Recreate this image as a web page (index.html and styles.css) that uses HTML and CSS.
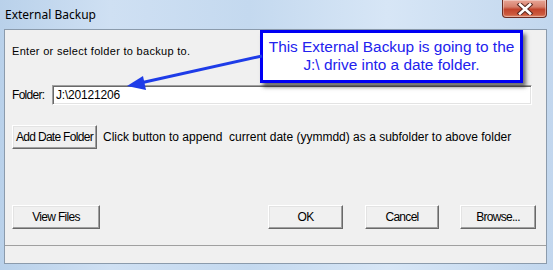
FILE: index.html
```html
<!DOCTYPE html>
<html>
<head>
<meta charset="utf-8">
<link rel="stylesheet" href="styles.css">
</head>
<body>
<div class="window">
  <div class="titlebar">
    <span class="title">External Backup</span>
    <div class="close">
      <svg width="20" height="12" viewBox="0 0 20 12">
        <path d="M5 1.5 L15 10.5 M15 1.5 L5 10.5" stroke="#5a2a22" stroke-width="4.6" stroke-linecap="square"/>
        <path d="M5 1.5 L15 10.5 M15 1.5 L5 10.5" stroke="#ffffff" stroke-width="2.6" stroke-linecap="square"/>
      </svg>
    </div>
  </div>
  <div class="client">
    <div class="content">
      <p class="prompt">Enter or select folder to backup to.</p>
      <div class="folder-row">
        <span class="label">Folder:</span>
        <div class="input">J:\20121206</div>
      </div>
      <div class="add-row">
        <button class="btn btn-add">Add Date Folder</button>
        <span class="hint">Click button to append&nbsp; current date (yymmdd) as a subfolder to above folder</span>
      </div>
      <div class="btn-row">
        <button class="btn btn-view">View Files</button>
        <div class="actions">
          <button class="btn btn-ok">OK</button>
          <button class="btn btn-cancel">Cancel</button>
          <button class="btn btn-browse">Browse...</button>
        </div>
      </div>
    </div>
    <div class="statusbar"></div>
  </div>
  <div class="callout">This External Backup is going to the<br>J:\ drive into a date folder.</div>
  <svg class="arrow" width="553" height="270" viewBox="0 0 553 270">
    <line x1="262" y1="56" x2="138" y2="83.5" stroke="#1e3ce8" stroke-width="3"/>
    <polygon points="127,86 143,76 146,90" fill="#1e3ce8"/>
  </svg>
</div>
</body>
</html>
```
FILE: styles.css
```css
* { box-sizing: border-box; }
html, body { margin: 0; padding: 0; }
body {
  width: 553px;
  height: 270px;
  overflow: hidden;
  font-family: "Liberation Sans", Arial, sans-serif;
  font-size: 11px;
  color: #000;
}
.window {
  position: relative;
  width: 553px;
  height: 270px;
  padding: 0 6px 6px 4px;
  display: flex;
  flex-direction: column;
  background: linear-gradient(90deg, #b9d1ea 0%, #cfe0f3 20%, #c4d9ef 45%, #d7e6f6 70%, #c2d7ee 100%);
}
.titlebar {
  height: 29px;
  display: flex;
  align-items: flex-start;
  flex: none;
}
.title {
  font-family: "Noto Sans", "Liberation Sans", sans-serif;
  font-size: 12px;
  margin: 6px 0 0 1px;
  color: #000;
}
.close {
  margin-left: auto;
  width: 45px;
  height: 18px;
  border: 1px solid #6b2d24;
  border-top: none;
  border-radius: 0 0 4px 4px;
  background: linear-gradient(180deg, #e8a596 0%, #d6806c 40%, #c2442c 55%, #cc5a3e 85%, #e08b6e 100%);
  display: flex;
  align-items: center;
  justify-content: center;
  box-shadow: inset 0 0 0 1px rgba(255,255,255,0.35);
}
.client {
  flex: 1;
  border: 1px solid #8b9bac;
  background: #f0f0f0;
  display: flex;
  flex-direction: column;
}
.content {
  padding: 0 0 0 7px;
  flex: 1;
}
.prompt {
  margin: 15px 0 0 0;
  line-height: 13px;
  letter-spacing: 0.3px;
}
.folder-row {
  margin-top: 27px;
  display: flex;
  align-items: center;
  height: 20px;
}
.label {
  width: 40px;
  font-size: 12px;
  letter-spacing: -0.7px;
}
.input {
  width: 480px;
  height: 20px;
  background: #fff;
  border: 1px solid;
  border-color: #a0a0a0 #fff #fff #a0a0a0;
  box-shadow: inset 1px 1px #696969, inset -1px -1px #e3e3e3;
  padding: 2px 0 0 3px;
  font-size: 12px;
  letter-spacing: -0.2px;
  line-height: 14px;
}
.btn {
  font-family: "Liberation Sans", Arial, sans-serif;
  font-size: 12px;
  letter-spacing: -0.7px;
  color: #000;
  background: #f0f0f0;
  height: 24px;
  padding: 0;
  margin: 0;
  border: 1px solid;
  border-color: #ffffff #696969 #696969 #ffffff;
  box-shadow: inset -1px -1px #a0a0a0, inset 1px 1px #e3e3e3;
  border-radius: 0;
}
.add-row {
  margin-top: 20px;
  display: flex;
  align-items: center;
}
.btn-add { width: 85px; }
.hint {
  margin-left: 6px;
  font-size: 12px;
}
.btn-row {
  margin-top: 56px;
  display: flex;
}
.btn-view { width: 88px; }
.actions {
  margin-left: 168px;
  display: flex;
}
.btn-ok { width: 75px; }
.btn-cancel { width: 74px; margin-left: 22px; }
.btn-browse { width: 76px; margin-left: 21px; }
.statusbar {
  height: 18px;
  border-top: 1px solid #a0a0a0;
  flex: none;
}
.callout {
  position: absolute;
  left: 260px;
  top: 30px;
  width: 263px;
  height: 53px;
  background: #fff;
  border: 3px solid #0000f4;
  box-shadow: 3px 4px 4px rgba(0,0,0,0.55);
  color: #2222ee;
  font-family: "Liberation Sans", Arial, sans-serif;
  font-size: 15.4px;
  line-height: 18px;
  text-align: center;
  padding-top: 5px;
}
.arrow {
  position: absolute;
  left: 0;
  top: 0;
  pointer-events: none;
}
```
